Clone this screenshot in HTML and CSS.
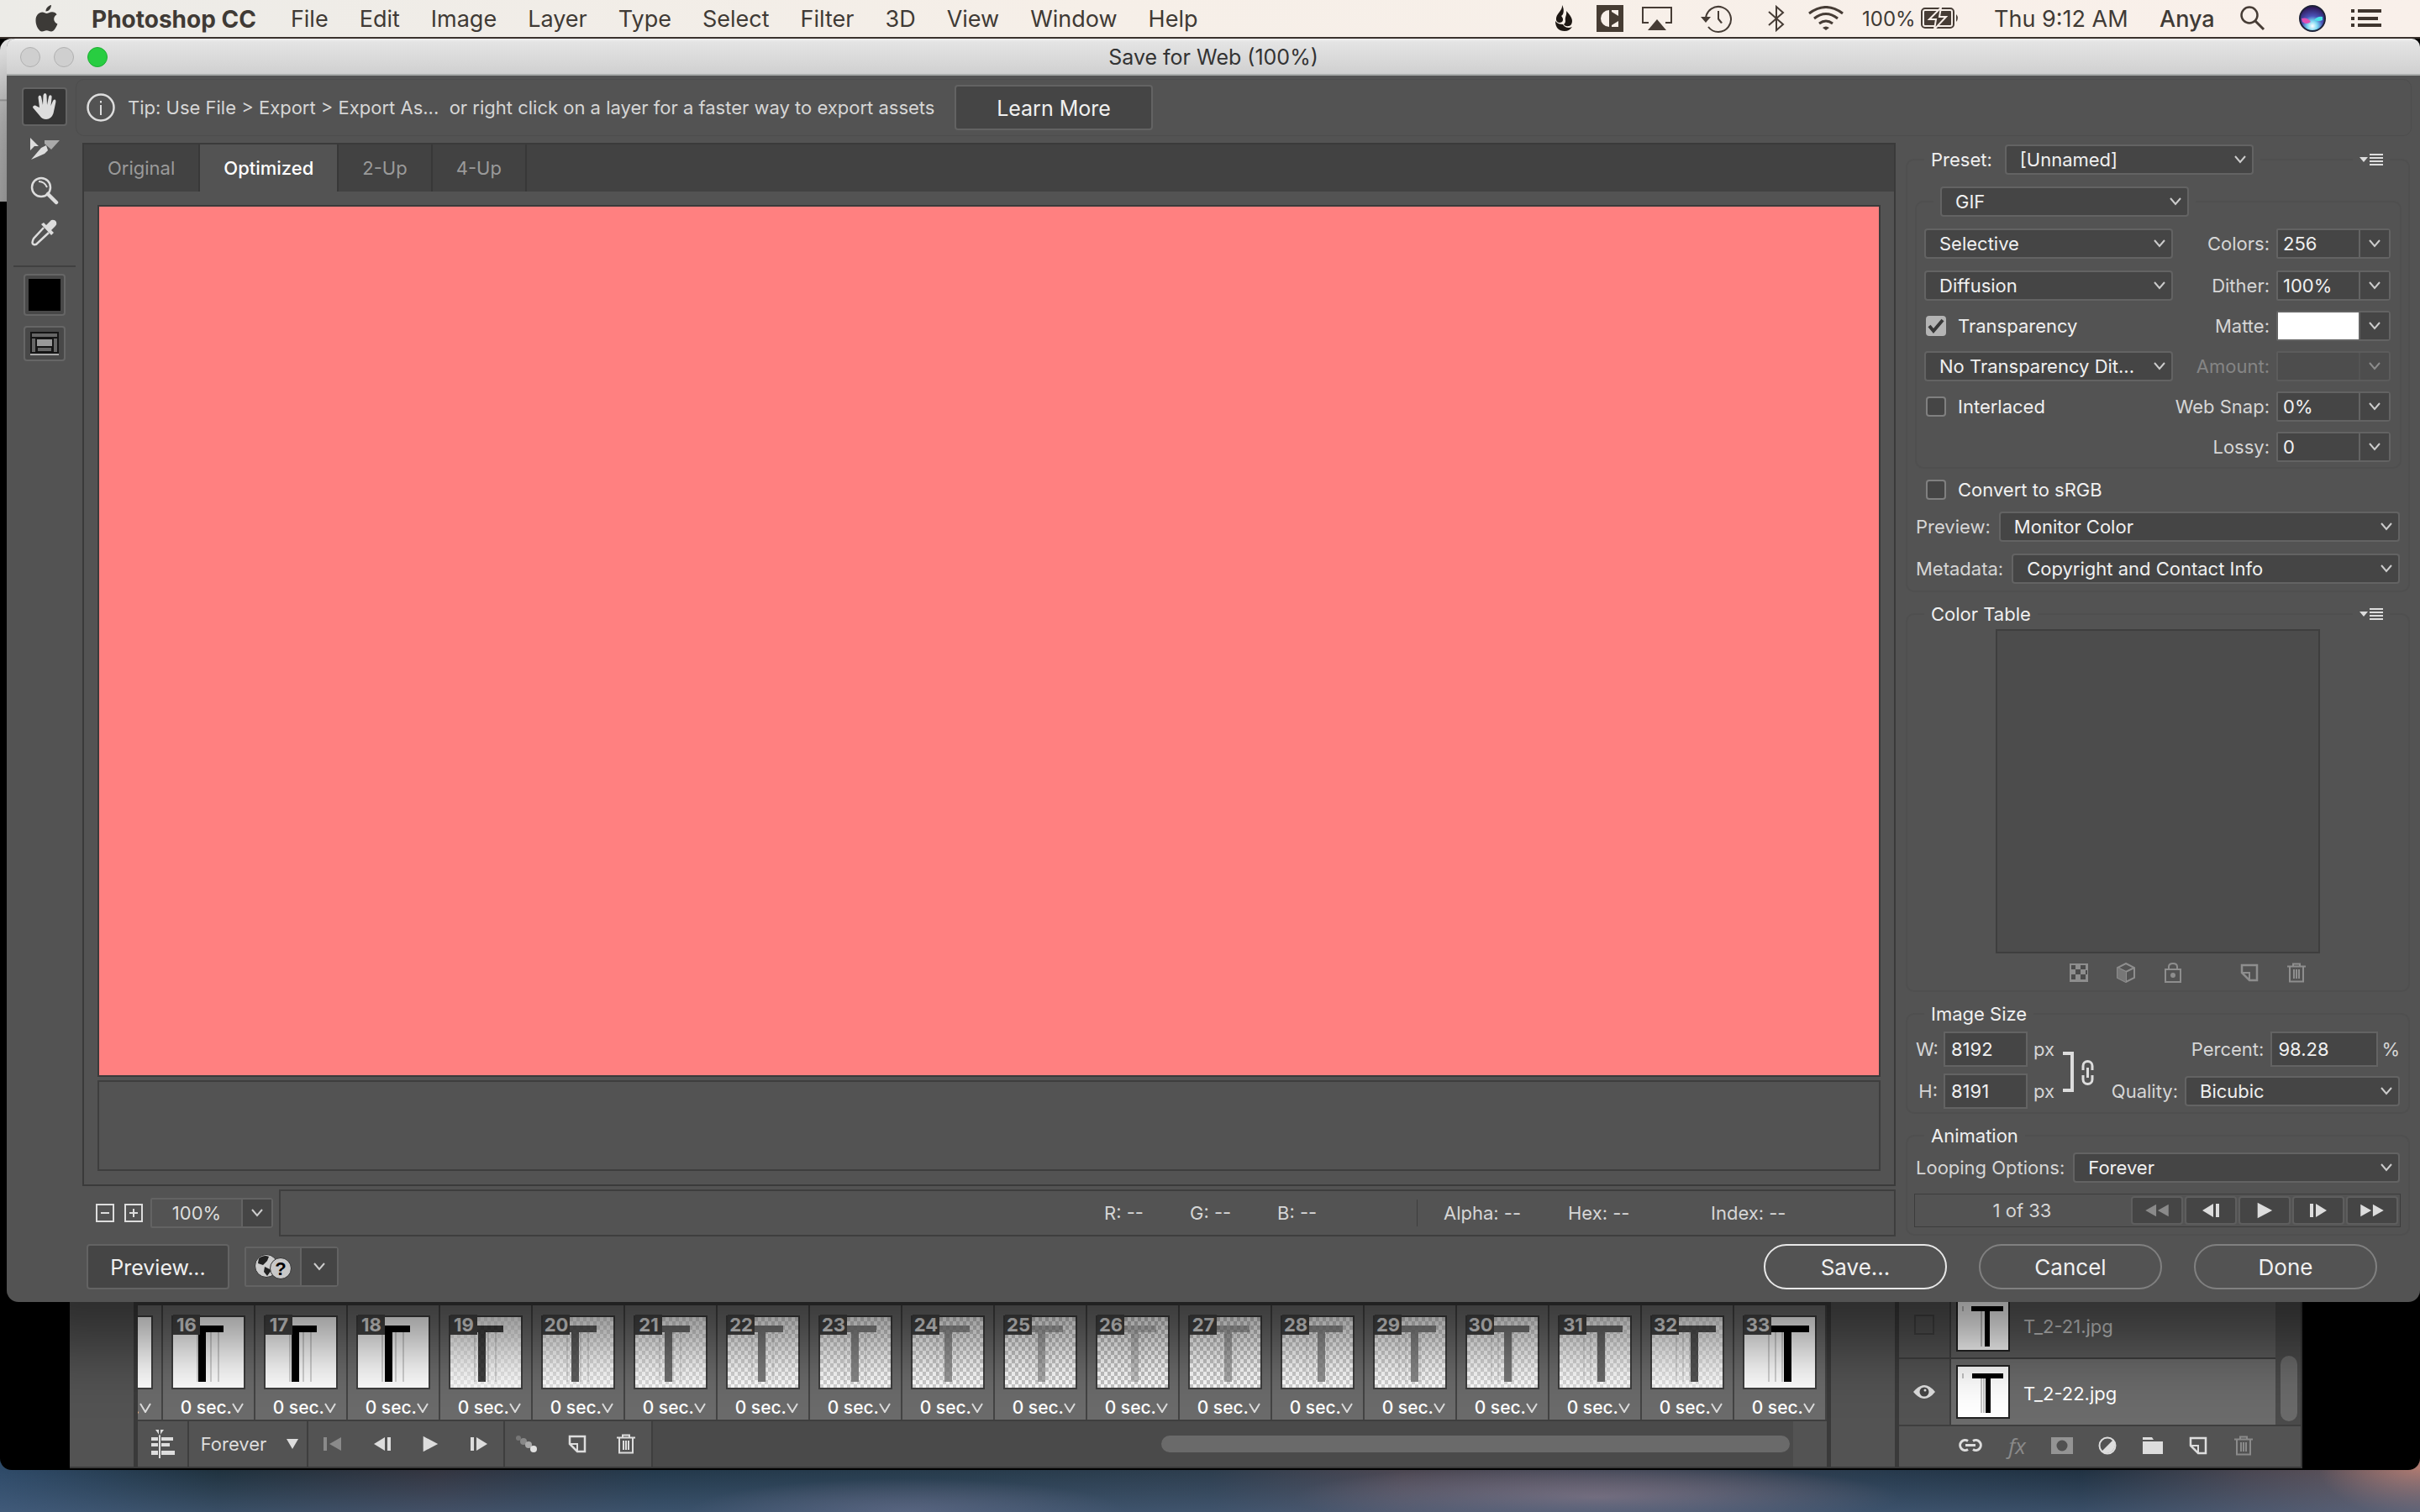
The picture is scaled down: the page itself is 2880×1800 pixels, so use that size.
FILE: index.html
```html
<!DOCTYPE html>
<html lang="en">
<head>
<meta charset="utf-8">
<title>Save for Web (100%)</title>
<link rel="stylesheet" href="styles.css">
</head>
<body>
<svg class="defs" aria-hidden="true">
  <symbol id="i-trash" viewBox="0 0 24 24"><path d="M1 4.500H23M8 4V1.500H16V4M4 5V22.500H20V5M9 8V19M12 8V19M15 8V19" fill="none" stroke="currentColor" stroke-width="2"/></symbol>
  <symbol id="i-new" viewBox="0 0 24 24"><path d="M3 3H21V21H12L3 12Z" fill="none" stroke="currentColor" stroke-width="2.500"/><path d="M3 12H12V21" fill="none" stroke="currentColor" stroke-width="2"/></symbol>
  <symbol id="i-prev" viewBox="0 0 24 24"><path d="M15 4V20L2 12ZM18 4H22V20H18Z" fill="currentColor"/></symbol>
  <symbol id="i-next" viewBox="0 0 24 24"><path d="M9 4V20L22 12ZM2 4H6V20H2Z" fill="currentColor"/></symbol>
  <symbol id="i-play" viewBox="0 0 24 24"><path d="M2 1V23L23 12Z" fill="currentColor"/></symbol>
  <symbol id="i-first" viewBox="0 0 24 18"><path d="M23 1V17L9 9ZM2 1H6V17H2Z" fill="currentColor"/></symbol>
  <symbol id="i-rew" viewBox="0 0 32 24"><path d="M15 4V20L1 12ZM31 4V20L17 12Z" fill="currentColor"/></symbol>
  <symbol id="i-ff" viewBox="0 0 32 24"><path d="M1 4V20L15 12ZM17 4V20L31 12Z" fill="currentColor"/></symbol>
  <symbol id="i-menu" viewBox="0 0 28 16"><path d="M0 5H10L5 11ZM12 1H28V3H12ZM12 5H28V7H12ZM12 9H28V11H12ZM12 13H28V15H12Z" fill="currentColor"/></symbol>
</svg>

<header class="menubar">
  <nav class="menus">
    <svg class="apple" viewBox="0 0 28 34"><path d="M20 1C20 5 17 8.500 13.500 8.500C13.200 5 16.500 1.500 20 1ZM14.500 11C16 11 18 9.200 21 9.200C23.500 9.200 25.500 10.500 26.600 12.200C21.500 15 22.500 21.500 27.400 23.500C26 27.500 23.200 32.500 20 32.500C18 32.500 17 31.200 14.500 31.200C12 31.200 10.800 32.500 9 32.500C5.500 32.500 1.500 26 1.500 19.500C1.500 13 5.500 9.600 9.300 9.600C11.500 9.600 13.200 11 14.500 11Z" fill="#3c3a37"/></svg>
    <a class="app" href="#">Photoshop CC</a><a href="#">File</a><a href="#">Edit</a><a href="#">Image</a><a href="#">Layer</a><a href="#">Type</a><a href="#">Select</a><a href="#">Filter</a><a href="#">3D</a><a href="#">View</a><a href="#">Window</a><a href="#">Help</a>
  </nav>
  <div class="status-items">
    <svg width="22" height="32" viewBox="0 0 22 32"><path d="M8 0C9 7 0 10 1 18C2 21 5 22 8 20C10 18 9 15 7 13C10 12 11 5 8 0ZM13 7C14 12 11 14 12 19C12 21 11 22 10 23C12 26 17 26 19 23C22 18 18 12 13 7ZM0 19C0 27 4 31 11 31C15 31 18 29 20 26C16 28 11 27 9 23C6 23 2 22 0 19Z" fill="#1d1713"/></svg>
    <svg width="32" height="32"><path d="M0 0H32V32H0Z" fill="#463c33"/><path d="M15 6V26A10 10 0 0 1 15 6ZM18 6H26V13L18 8ZM18 26H26V19L18 24Z" fill="#f8efe9"/></svg>
    <svg width="36" height="28" viewBox="0 0 36 28"><path d="M8 19H1V1H35V19H28" fill="none" stroke="#463c35" stroke-width="2"/><path d="M7 28L18 15L29 28Z" fill="#463c35"/></svg>
    <svg width="38" height="34" viewBox="0 0 38 34"><path d="M6 17A15 15 0 1 1 9 27" fill="none" stroke="#463c35" stroke-width="2"/><path d="M0 15H12L6 22ZM20 8H22V17L26 22L24 23L20 18Z" fill="#463c35"/></svg>
    <svg width="20" height="32" viewBox="0 0 20 32"><path d="M1 8L18 23L10 30V2L18 9L1 24" fill="none" stroke="#463c35" stroke-width="2"/></svg>
    <svg width="42" height="30" viewBox="0 0 42 30"><path d="M1 9Q21-6 41 9M7 15Q21 4 35 15M13 21Q21 15 29 21" fill="none" stroke="#463c35" stroke-width="3"/><path d="M21 29L17 26Q21 23 25 26Z" fill="#463c35"/></svg>
    <span class="pct">100%</span>
    <svg width="46" height="26" viewBox="0 0 46 26"><rect x="1" y="1" width="38" height="23" rx="4" fill="none" stroke="#463c35" stroke-width="2"/><rect x="4" y="4" width="32" height="17" rx="1" fill="#463c35"/><path d="M42 8Q46 12 42 17Z" fill="#463c35"/><path d="M24 0L10 14H18L16 26L30 11H22Z" fill="#463c35" stroke="#f8efe9" stroke-width="2"/></svg>
    <span>Thu 9:12 AM</span>
    <span class="user">Anya</span>
    <svg width="30" height="30" viewBox="0 0 30 30"><circle cx="11" cy="11" r="9.500" fill="none" stroke="#463c35" stroke-width="2.500"/><path d="M18 18L28 28" stroke="#463c35" stroke-width="3"/></svg>
    <svg width="32" height="32"><defs><radialGradient id="siri" cx=".5" cy=".8" r=".8"><stop offset="0" stop-color="#fff"/><stop offset=".25" stop-color="#7ad7f2"/><stop offset=".5" stop-color="#4a52b8"/><stop offset="1" stop-color="#2a0f4a"/></radialGradient></defs><circle cx="16" cy="16" r="15" fill="url(#siri)" stroke="#1d2238" stroke-width="2"/><path d="M3 16Q10 14 14 20Q9 24 4 20Z" fill="#e04fb4"/><path d="M28 14Q22 13 18 18Q24 20 28 18Z" fill="#49e2e8"/></svg>
    <svg width="36" height="22"><path d="M0 0H4V4H0ZM8 0H36V4H8ZM0 9H4V13H0ZM8 9H32V13H8ZM0 17H4V21H0ZM8 17H36V21H8Z" fill="#3f352e"/></svg>
  </div>
</header>

<main class="desktop">
  <section class="app-window">
    <div class="app-chrome"></div>
    <div class="docks">
      <div class="dock"></div>
      <div class="timeline">
        <div class="frames" id="frames"></div>
        <div class="timeline-bar">
          <button class="cell c-conv" aria-label="Convert to video timeline"><svg width="28" height="34" viewBox="0 0 28 34"><path d="M0 9H8V13H0ZM12 9H26V13H12ZM0 16H8V20H0ZM12 16H22V20H12ZM0 25H8V30H0ZM12 25H28V30H12Z" fill="#ddd"/><path d="M9 0V34H11V0M5 0H15L10 7Z" fill="#ddd"/></svg></button>
          <button class="cell c-loop">Forever<svg width="14" height="12"><path d="M0 0H14L7 12Z" fill="#ddd"/></svg></button>
          <div class="cell c-play">
            <button class="dim" aria-label="First frame"><svg width="24" height="18"><use href="#i-first"/></svg></button>
            <button aria-label="Previous frame"><svg width="24" height="24"><use href="#i-prev"/></svg></button>
            <button aria-label="Play"><svg width="20" height="20"><use href="#i-play"/></svg></button>
            <button aria-label="Next frame"><svg width="24" height="24"><use href="#i-next"/></svg></button>
          </div>
          <div class="cell c-edit">
            <button aria-label="Tween"><svg width="28" height="22"><circle cx="4" cy="4" r="3" fill="#777"/><circle cx="10" cy="8" r="4" fill="#888"/><circle cx="16" cy="12" r="4" fill="#aaa"/><circle cx="22" cy="17" r="4" fill="#e0e0e0"/></svg></button>
            <button aria-label="Duplicate frame"><svg width="24" height="24"><use href="#i-new"/></svg></button>
            <button aria-label="Delete frame"><svg width="24" height="24"><use href="#i-trash"/></svg></button>
          </div>
          <div class="track"><div class="thumb"></div></div>
        </div>
      </div>
      <div class="dock"></div>
      <div class="layers">
        <div class="layer-list">
          <div class="layer off"><span class="eye"><i class="noeye"></i></span><div class="layer-main"><svg class="pic" viewBox="0 0 60 60"><path fill="#fff" d="M0 0H60V60H0Z"/><path d="M16 8H54V14H16ZM32 14H38V56H32Z"/><path d="M6 8V14M28 14V56" stroke="#888"/></svg><span>T_2-21.jpg</span></div></div>
          <div class="layer on"><span class="eye"><svg width="26" height="16"><path d="M0 8Q13-8 26 8Q13 24 0 8Z" fill="#ddd"/><circle cx="13" cy="8" r="5.500" fill="#444"/><circle cx="14" cy="6" r="1.500" fill="#ddd"/></svg></span><div class="layer-main"><svg class="pic" viewBox="0 0 60 60"><path fill="#fff" d="M0 0H60V60H0Z"/><path d="M17 8H54V14H17ZM33 14H39V55H33Z"/><path d="M6 8V14M28 14V55M31 14V55" stroke="#888"/></svg><span>T_2-22.jpg</span></div></div>
        </div>
        <div class="vtrack"><div class="vthumb"></div></div>
        <div class="layer-bar">
          <button aria-label="Link layers"><svg width="30" height="18"><path d="M12 3.500A6 6 0 1 0 12 13.500M18 3.500A6 6 0 1 1 18 13.500" fill="none" stroke="#ddd" stroke-width="3"/><path d="M9 8.500H21" stroke="#ddd" stroke-width="3"/></svg></button>
          <button class="dim fx">fx</button>
          <button class="dim" aria-label="Add mask"><svg width="26" height="20"><path d="M0 0H26V20H0Z" fill="#949494"/><circle cx="13" cy="10" r="6.500" fill="#505050"/></svg></button>
          <button aria-label="Adjustment layer"><svg width="22" height="22"><circle cx="11" cy="11" r="9.500" fill="none" stroke="#ddd" stroke-width="2"/><path d="M18 4A10 10 0 0 1 4 18Z" fill="#ddd"/></svg></button>
          <button aria-label="New group"><svg width="24" height="20"><path d="M0 0H11L13 3H0ZM0 5H24V20H0Z" fill="#ddd"/></svg></button>
          <button aria-label="New layer"><svg width="24" height="24"><use href="#i-new"/></svg></button>
          <button class="dim" aria-label="Delete layer"><svg width="24" height="24"><use href="#i-trash"/></svg></button>
        </div>
      </div>
    </div>
  </section>

  <section class="dialog" role="dialog" aria-labelledby="dlg-title">
    <header class="titlebar">
      <div class="lights"><i></i><i></i><i class="go"></i></div>
      <h1 id="dlg-title">Save for Web (100%)</h1>
    </header>
    <div class="dialog-body">
      <aside class="tools">
        <button class="tool active" aria-label="Hand"><svg width="28" height="32" viewBox="0 0 28 32"><path d="M8 17L6.500 5Q6.500 2.500 8.500 2.500Q10 2.500 10.300 5L12 14L12.500 2.500Q13 0 14.500 0Q16.500 0 16.500 2.500L17 14L19 4Q19.500 2 21 2.200Q23 2.500 22.600 5L21.500 15L24 9Q25 7 26.500 7.600Q28 8.500 27.300 11L24.500 24Q22 31 16 31Q11 31 8.500 27L0 17Q0 14 3 14.500Z" fill="#ddd"/></svg></button>
        <button class="tool" aria-label="Slice Select"><svg width="36" height="28" viewBox="0 0 36 28"><path d="M1 1L11 11L6 11L1 16Z" fill="#ddd"/><path d="M2 27L14 13L20 10L22 16L18 20Z" fill="#ddd"/><path d="M18 4H36L26 15L18 8Z" fill="#aaa"/></svg></button>
        <button class="tool" aria-label="Zoom"><svg width="34" height="34" viewBox="0 0 34 34"><circle cx="13" cy="13" r="11" fill="none" stroke="#ddd" stroke-width="2.500"/><path d="M10 6Q17 6 20 13" fill="none" stroke="#ddd" stroke-width="2"/><path d="M21 21L31 31" stroke="#ddd" stroke-width="4.500" stroke-linecap="round"/></svg></button>
        <button class="tool" aria-label="Eyedropper"><svg width="34" height="34" viewBox="0 0 34 34"><path d="M16 11L4 24Q1 30 4 31Q7 32 9 29L22 17" fill="none" stroke="#ddd" stroke-width="2.500"/><path d="M13 7L16 5L19 8L25 2Q29 1 31 4Q32 7 30 9L25 14L28 17L25 20Z" fill="#ddd"/></svg></button>
        <hr>
        <button class="swatch" aria-label="Eyedropper color"><i></i></button>
        <button class="swatch slices" aria-label="Toggle slices visibility"><svg width="34" height="28"><path d="M0 0H34V28H0Z" fill="#151515"/><path d="M2 2H32V6H2ZM2 8H6V24H2ZM28 8H32V24H28ZM9 19H25V23H9Z" fill="#666"/><path d="M8 9H26V17H8Z" fill="#999"/><path d="M0 26H34V28H0Z" fill="#aaa"/></svg></button>
      </aside>
      <div class="content">
        <div class="tip">
          <svg width="34" height="34"><circle cx="17" cy="17" r="15.500" fill="none" stroke="#ddd" stroke-width="2.500"/><path d="M16 9H18V11.500H16ZM16 14H18V26H16Z" fill="#ddd"/></svg>
          <p>Tip: Use File &gt; Export &gt; Export As...&nbsp; or right click on a layer for a faster way to export assets</p>
          <button class="push learn">Learn More</button>
        </div>
        <div class="columns">
          <div class="left">
            <div class="view">
              <div class="tabs"><button>Original</button><button class="sel">Optimized</button><button>2-Up</button><button>4-Up</button></div>
              <div class="canvas"></div>
              <div class="info"></div>
            </div>
            <div class="zoombar">
              <button class="zb" aria-label="Zoom out"><svg width="22" height="22"><path d="M1 1H21V21H1ZM6 11H16" fill="none" stroke="#ddd" stroke-width="2"/></svg></button>
              <button class="zb" aria-label="Zoom in"><svg width="22" height="22"><path d="M1 1H21V21H1ZM6 11H16M11 6V16" fill="none" stroke="#ddd" stroke-width="2"/></svg></button>
              <div class="combo zoom"><input value="100%" aria-label="Zoom level"><button aria-label="Zoom levels"></button></div>
              <div class="readout"><span>R: --</span><span>G: --</span><span>B: --</span><i></i><span>Alpha: --</span><span>Hex: --</span><span>Index: --</span></div>
            </div>
          </div>
          <form class="panel">
            <fieldset>
              <legend><label for="preset">Preset:</label><select id="preset" class="w296"><option>[Unnamed]</option></select></legend>
              <button type="button" class="pmenu" aria-label="Optimize menu"><svg width="28" height="16"><use href="#i-menu"/></svg></button>
              <fieldset class="inner">
                <legend><select class="w296" aria-label="Format"><option>GIF</option></select></legend>
                <div class="opts">
                  <select aria-label="Color reduction"><option>Selective</option></select><label for="colors">Colors:</label><div class="combo"><input id="colors" value="256"><button type="button" aria-label="Color counts"></button></div>
                  <select aria-label="Dither method"><option>Diffusion</option></select><label for="dither">Dither:</label><div class="combo"><input id="dither" value="100%"><button type="button" aria-label="Dither amounts"></button></div>
                  <label class="check"><input type="checkbox" checked>Transparency</label><label for="matte">Matte:</label><div class="combo"><input id="matte" class="white" readonly><button type="button" aria-label="Matte colors"></button></div>
                  <select aria-label="Transparency dither"><option>No Transparency Dit...</option></select><label class="off" for="amount">Amount:</label><div class="combo off"><input id="amount" disabled><button type="button" disabled aria-label="Amounts"></button></div>
                  <label class="check"><input type="checkbox">Interlaced</label><label for="snap">Web Snap:</label><div class="combo"><input id="snap" value="0%"><button type="button" aria-label="Web snap amounts"></button></div>
                  <span></span><label for="lossy">Lossy:</label><div class="combo"><input id="lossy" value="0"><button type="button" aria-label="Lossy amounts"></button></div>
                </div>
              </fieldset>
              <label class="check srgb"><input type="checkbox">Convert to sRGB</label>
              <div class="row"><label for="preview">Preview:</label><select id="preview"><option>Monitor Color</option></select></div>
              <div class="row"><label for="meta">Metadata:</label><select id="meta"><option>Copyright and Contact Info</option></select></div>
            </fieldset>
            <fieldset class="ctable">
              <legend>Color Table</legend>
              <button type="button" class="pmenu" aria-label="Color table menu"><svg width="28" height="16"><use href="#i-menu"/></svg></button>
              <div class="table-box"></div>
              <div class="table-tools">
                <button type="button" aria-label="Map to transparent"><svg width="24" height="24"><path d="M1 1H23V23H1Z" fill="#8e8e8e"/><path d="M3 3H8V8H3ZM14 3H20V8H14ZM8 8H14V14H8ZM3 14H8V20H3ZM14 14H20V20H14ZM20 9H22V14H20Z" fill="#4c4c4c"/></svg></button>
                <button type="button" aria-label="Shift to web palette"><svg width="24" height="24"><path d="M12 1L22 6V18L12 23L2 18V6ZM2 6L12 11L22 6M12 11V23" fill="none" stroke="#8e8e8e" stroke-width="2"/><path d="M2 6L12 11V23L2 18Z" fill="#777"/></svg></button>
                <button type="button" aria-label="Lock color"><svg width="24" height="24"><path d="M3 8H21V23H3ZM7 8V5Q7 1 12 1Q17 1 17 5V8" fill="none" stroke="#8e8e8e" stroke-width="2"/><circle cx="12" cy="15" r="3" fill="#8e8e8e"/></svg></button>
                <button type="button" class="push-right" aria-label="New color"><svg width="24" height="24"><use href="#i-new"/></svg></button>
                <button type="button" aria-label="Delete color"><svg width="24" height="24"><use href="#i-trash"/></svg></button>
              </div>
            </fieldset>
            <fieldset class="isize">
              <legend>Image Size</legend>
              <div class="size">
                <div class="dims">
                  <label for="w">W:</label><input id="w" value="8192"><span>px</span>
                  <label for="h">H:</label><input id="h" value="8191"><span>px</span>
                </div>
                <svg class="link" width="40" height="50"><path d="M0 2H11V46H0" fill="none" stroke="#ddd" stroke-width="4"/><path d="M24 22V17A5.500 5.500 0 0 1 35 17V22M24 28V33A5.500 5.500 0 0 0 35 33V28" fill="none" stroke="#ddd" stroke-width="3"/><path d="M29.500 19V31" stroke="#ddd" stroke-width="3"/></svg>
                <div class="scale">
                  <div><label for="pc">Percent:</label><input id="pc" value="98.28"><span>%</span></div>
                  <div><label for="q">Quality:</label><select id="q"><option>Bicubic</option></select></div>
                </div>
              </div>
            </fieldset>
            <fieldset class="anim">
              <legend>Animation</legend>
              <div class="row"><label for="loop">Looping Options:</label><select id="loop"><option>Forever</option></select></div>
              <div class="player"><span>1 of 33</span>
                <button type="button" class="dim" aria-label="First"><svg width="32" height="22"><use href="#i-rew"/></svg></button>
                <button type="button" aria-label="Previous"><svg width="24" height="24"><use href="#i-prev"/></svg></button>
                <button type="button" aria-label="Play"><svg width="20" height="20"><use href="#i-play"/></svg></button>
                <button type="button" aria-label="Next"><svg width="24" height="24"><use href="#i-next"/></svg></button>
                <button type="button" aria-label="Last"><svg width="32" height="22"><use href="#i-ff"/></svg></button>
              </div>
            </fieldset>
          </form>
        </div>
      </div>
    </div>
    <footer class="actions">
      <button class="push preview">Preview...</button>
      <div class="browser"><button aria-label="Preview browser"><svg width="44" height="32"><circle cx="14" cy="15" r="13.500" fill="#ccc" stroke="#333"/><path d="M5 6Q11 1 17 4L15 9L10 14L4 12ZM12 16L20 20L15 27L11 22Z" fill="#222"/><circle cx="31" cy="18" r="12.500" fill="#c8c8c8" stroke="#333"/><text x="31" y="26" text-anchor="middle" class="q">?</text></svg></button><button class="drop" aria-label="Browser list"></button></div>
      <button class="pill save">Save...</button><button class="pill">Cancel</button><button class="pill">Done</button>
    </footer>
  </section>
</main>
<script src="frames.js"></script>
</body>
</html>
```
FILE: frames.js
```js
// Opacity of the letter in each animation frame, from frame 15 to frame 33.
const fade = [1, 1, 1, 1, .76, .64, .56, .5, .45, .38, .3, .2, .3, .4, .45, .52, .58, .68, 1];
const strip = document.getElementById("frames");
strip.innerHTML = fade.map((o, i) => {
  const x = 29 + i;
  const check = o === 1 ? 0 : Math.min(1, (1 - o) * 1.3);
  // The first frame is scrolled almost out of view: only its right edge shows.
  const first = i === 0;
  return `<div class="frame">
    <svg width="84" height="84" class="shot">
      <rect width="84" height="84" fill="#fff"/>
      <rect width="84" height="84" fill="url(#checks)" opacity="${check}"/>
      <g opacity="${o}">
        <rect x="${first ? 0 : x - 20}" y="10" width="50" height="8"/><rect x="${x}" y="18" width="9" height="59"/>
        <path d="M29 18V77M37 18V77M45 18V77M54 18V77" stroke="#000" stroke-opacity=".35"/>
      </g>
      <rect width="84" height="84" fill="url(#checks)" opacity="${check / 4}"/>
    </svg>
    ${first ? "" : `<b>${i + 15}</b>`}
    <button>${first ? "." : "0 sec."}<svg width="14" height="12"><path d="M1 1L7 11L13 1" fill="none" stroke="#ddd" stroke-width="2"/></svg></button>
  </div>`;
}).join("") + `<svg class="defs"><pattern id="checks" width="8" height="10" patternUnits="userSpaceOnUse"><path d="M0 0H4V5H0ZM4 5H8V10H4Z" fill="#c8c8c8"/></pattern></svg>`;
```
FILE: styles.css
```css
* { box-sizing: border-box; }
html, body { height: 100%; }
body { margin: 0; display: flex; flex-direction: column; overflow: hidden; font: 22px/28px Inter, "Liberation Sans", sans-serif; color: #d6d6d6; background: #000; }
button, input, select { font: inherit; color: inherit; margin: 0; border: 0; background: none; padding: 0; border-radius: 0; }
button { display: flex; align-items: center; justify-content: center; }
svg { display: block; flex: none; }
.defs { position: absolute; width: 0; height: 0; }

/* Menu bar */
.menubar { flex: none; height: 46px; display: flex; justify-content: space-between; align-items: center; padding: 0 46px 0 40px; background: linear-gradient(90deg, #ecebe7, #f6efe8 45%, #f9f0ea); border-bottom: 2px solid #3a322d; font-size: 27px; color: #3f3a35; position: relative; z-index: 3; }
.menus { display: flex; align-items: center; gap: 37px; }
.menus a { color: inherit; text-decoration: none; padding-top: 1px; }
.menus .app { font-weight: 700; font-size: 28px; margin-right: 4px; }
.apple { width: 30px; height: 34px; margin-right: 2px; }
.status-items { display: grid; grid-template-columns: 49px 54px 70px 80px 48px 64px 70px 87px 197px 96px 70px 62px 36px; align-items: center; white-space: nowrap; }
.status-items span { padding-top: 1px; }
.pct { font-size: 24px; }
.user { font-weight: 500; }

/* Desktop and the application window behind the dialog */
.desktop { flex: 1; position: relative; background: linear-gradient(transparent 97%, rgba(80, 104, 136, .55)), radial-gradient(360px 40px at 1900px 99%, #86707a, transparent), radial-gradient(260px 40px at 1080px 100%, #5f6076, transparent), radial-gradient(120px 60px at 100% 97%, #b07a70, transparent), linear-gradient(90deg, #2e4a68, #1e303c 9%, #33343e 18%, #22384a 27%, #263a4a 40%, #2c3c4c 50%, #4c4650 58%, #3a4252 66%, #25384a 78%, #1f3040 86%, #4a4650 93%, #6a5a60); }
.app-window { position: absolute; inset: 0 0 50px; background: #000; border-radius: 0 0 14px 14px; display: flex; flex-direction: column; justify-content: space-between; overflow: hidden; }
.app-chrome { height: 194px; background: linear-gradient(#e8e8e8, #d2d2d2 72px, #999 73px, #ccc 75px, #bbb); border-radius: 14px 14px 0 0; }
.docks { display: grid; grid-template-columns: 76px 1fr 76px 480px; gap: 5px; margin: 0 140px 2px 83px; background: #3a3a3a; height: 250px; border-bottom: 2px solid #3a3a3a; }
.dock { background: #535353; }
.timeline { display: flex; flex-direction: column; justify-content: flex-end; min-width: 0; }
.frames { display: flex; justify-content: flex-end; overflow: hidden; height: 136px; }
.frame { flex: none; width: 110px; height: 136px; position: relative; background: #6b6b6b; border-right: 2px solid #444; padding: 14px 0 0 12px; }
.shot { outline: 2px solid #3e3e3e; }
.frame b { position: absolute; left: 12px; top: 11px; width: 32px; height: 24px; background: #464646; color: #e0e0e0; font-weight: 700; text-align: center; line-height: 24px; }
.frame button { justify-content: flex-end; width: 84px; margin-top: 10px; color: #fff; font-size: 21px; font-weight: 500; white-space: nowrap; }
.timeline-bar { display: flex; height: 56px; border-top: 2px solid #3e3e3e; background: #4a4a4a; color: #ddd; }
.cell { background: #535353; border-right: 2px solid #3e3e3e; display: flex; align-items: center; flex: none; }
.c-conv { width: 61px; }
.c-loop { width: 142px; gap: 24px; padding-left: 4px; }
.c-play { width: 234px; justify-content: space-between; padding: 0 17px 0 16px; }
.c-edit { width: 176px; justify-content: space-between; padding: 0 18px 0 12px; }
.dim { color: #8a8a8a; }
.track { flex: 1; margin-right: 40px; display: flex; justify-content: flex-end; align-items: center; padding-right: 4px; box-shadow: 40px 0 #535353; }
.thumb { width: 748px; height: 20px; border-radius: 10px; background: #6a6a6a; }
.layers { display: grid; grid-template-columns: 1fr 30px; grid-template-rows: 1fr 48px; border-right: 2px solid #3a3a3a; background: #535353; overflow: hidden; }
.layer-list { display: flex; flex-direction: column; justify-content: flex-end; gap: 2px; background: #3e3e3e; border-bottom: 2px solid #3e3e3e; }
.layer { display: flex; flex: none; height: 78px; gap: 2px; }
.eye { width: 60px; background: #535353; display: flex; align-items: center; justify-content: center; }
.noeye { width: 24px; height: 24px; border: 2px solid #414141; }
.layer-main { flex: 1; display: flex; align-items: center; gap: 16px; padding-left: 6px; background: #5c5c5c; color: #ccc; }
.layer-main span { padding-top: 3px; }
.on .layer-main { background: #6b6b6b; color: #fff; }
.pic { width: 64px; height: 64px; border: 2px solid #222; }
.vtrack { background: #4a4a4a; padding: 0 4px 4px 6px; display: flex; align-items: flex-end; border-bottom: 2px solid #3e3e3e; }
.vthumb { width: 20px; height: 78px; border-radius: 10px; background: #6a6a6a; }
.layer-bar { grid-column: 1 / -1; display: flex; align-items: center; justify-content: space-between; padding: 0 56px 2px 70px; color: #ddd; }
.fx { font: italic 26px/28px "Open Sans", sans-serif; }

/* Dialog */
.dialog { position: absolute; inset: 0 0 250px 8px; display: flex; flex-direction: column; background: #535353; border-radius: 10px 10px 14px 14px; box-shadow: 0 50px 80px rgba(0, 0, 0, .48); overflow: hidden; z-index: 2; }
.titlebar { flex: none; height: 44px; background: linear-gradient(#f0f0f0, #e4e4e4 10%, #d0d0d0); border-bottom: 2px solid #a9acab; display: grid; grid-template-columns: 1fr auto 1fr; align-items: center; }
.titlebar h1 { margin: 0; padding-top: 2px; font-size: 25px; font-weight: 400; color: #333; }
.lights { display: flex; gap: 16px; padding: 2px 0 0 16px; }
.lights i { width: 24px; height: 24px; border-radius: 50%; background: #cfcfcf; border: 1px solid #b0b0b0; }
.lights .go { background: #28cd41; border-color: #1fae33; }
.dialog-body { flex: 1; display: flex; min-height: 0; }
.tools { width: 90px; flex: none; display: flex; flex-direction: column; align-items: center; padding: 14px 0 0; }
.tool { width: 54px; height: 46px; margin-bottom: 4px; }
.tool.active { background: #353535; border: 2px solid #636363; border-radius: 4px; }
.tools hr { width: 74px; margin: 12px 0 8px; border: 0; border-top: 2px solid #404040; }
.swatch { width: 50px; height: 50px; margin: 0 0 12px; background: #484848; border: 2px solid #666; border-radius: 4px; }
.swatch i { width: 38px; height: 38px; background: #000; }
.slices { height: 42px; }
.content { flex: 1; display: flex; flex-direction: column; min-width: 0; }
.tip { height: 68px; margin: 4px 10px 8px -8px; border: 1px solid #4d4d4d; border-radius: 10px; display: flex; align-items: center; padding-left: 12px; gap: 15px; }
.tip p { margin: 0; width: 969px; white-space: nowrap; }
.push { background: #454545; border: 2px solid #636363; border-radius: 4px; color: #f0f0f0; font-size: 25px; height: 54px; padding-top: 2px; }
.learn { width: 236px; }
.columns { flex: 1; display: flex; min-height: 0; }
.left { flex: 1; display: flex; flex-direction: column; min-width: 0; }
.view { flex: 1; display: flex; flex-direction: column; border: 2px solid #3a3a3a; }
.tabs { display: flex; height: 56px; background: #424242; color: #9a9a9a; }
.tabs button { padding: 0 28px; border-right: 2px solid #383838; }
.tabs .sel { background: #535353; color: #fff; font-weight: 500; }
.canvas { flex: 1; margin: 16px 16px 4px; border: 2px solid #3a3a3a; background: #ff8080; }
.info { height: 108px; margin: 0 16px 16px; border: 2px solid #3e3e3e; }
.zoombar { display: flex; align-items: center; height: 60px; padding: 4px 0 0 16px; margin-bottom: 9px; }
.zb { margin-right: 12px; }
.zb + .zb { margin-right: 9px; }
.readout { flex: 1; align-self: stretch; margin-left: 7px; border: 2px solid #3e3e3e; display: grid; grid-template-columns: 102px 104px 166px 32px 148px 170px 218px; justify-content: end; align-items: center; }
.readout i { width: 1px; height: 32px; background: #3e3e3e; }

/* Settings panel */
.panel { width: 624px; flex: none; padding: 2px 12px 0; color: #d6d6d6; }
fieldset { position: relative; min-width: 0; margin: 0 0 11px; padding: 14px 10px 8px 10px; border: 2px solid #4f4f4f; border-radius: 10px; }
legend { margin-left: 10px; padding: 0 8px; color: #f0f0f0; display: flex; align-items: center; gap: 15px; min-height: 30px; }
select { appearance: none; height: 36px; min-width: 0; padding: 0 40px 0 16px; border: 2px solid #636363; border-radius: 4px; color: #f0f0f0; line-height: 28px; background: #454545 url("data:image/svg+xml,%3Csvg xmlns='http://www.w3.org/2000/svg' width='14' height='10'%3E%3Cpath d='M1 1L7 8L13 1' fill='none' stroke='%23ccc' stroke-width='2'/%3E%3C/svg%3E") no-repeat right 7px center; }
.w296 { width: 296px; }
.pmenu { position: absolute; right: 22px; top: -34px; padding: 8px; background: #535353; color: #ddd; }
.inner { margin-bottom: 7px; padding: 14px 11px 6px 9px; margin-left: -1px; margin-right: -2px; }
.inner legend { margin-left: 11px; }
.opts { display: grid; grid-template-columns: 296px 1fr 136px; grid-template-rows: 38px; grid-auto-rows: 36px; row-gap: 12px; align-items: start; line-height: 36px; }
.opts > label:not(.check) { text-align: right; padding-right: 8px; white-space: nowrap; }
.opts .off { color: #858585; }
.combo { display: flex; height: 36px; border: 2px solid #636363; border-radius: 2px 4px 4px 2px; background: #454545; }
.combo input { flex: 1; width: 0; padding-left: 6px; color: #f0f0f0; }
.combo button, .drop { width: 36px; border-left: 2px solid #636363; background: #454545 url("data:image/svg+xml,%3Csvg xmlns='http://www.w3.org/2000/svg' width='14' height='10'%3E%3Cpath d='M1 1L7 8L13 1' fill='none' stroke='%23ccc' stroke-width='2'/%3E%3C/svg%3E") no-repeat center; }
.combo .white { background: #fff; }
.combo.off { border-color: #5c5c5c; background: #4d4d4d; }
.combo.off button { background-color: #4d4d4d; border-color: #5c5c5c; opacity: .5; }
.zoom { width: 146px; background: none; }
.zoom input { text-align: center; padding: 0; color: #ddd; }
.check { display: flex; align-items: center; gap: 14px; height: 36px; color: #f0f0f0; padding-left: 2px; line-height: 36px; }
.check input { appearance: none; width: 24px; height: 24px; border: 2px solid #808080; border-radius: 4px; background: #454545; }
.check input:checked { border-color: #b4b4b4; background: #b4b4b4 url("data:image/svg+xml,%3Csvg xmlns='http://www.w3.org/2000/svg' width='20' height='20'%3E%3Cpath d='M2 10L7 16L18 3' fill='none' stroke='%23383838' stroke-width='4'/%3E%3C/svg%3E") center; }
.srgb { padding-left: 12px; }
.row { display: flex; align-items: center; gap: 10px; margin-top: 14px; }
.srgb + .row { margin-top: 8px; }
.row select { flex: 1; }
.ctable { padding-top: 3px; padding-bottom: 9px; }
.ctable > .pmenu { top: -31px; }
.table-box { width: 386px; height: 386px; margin: 0 auto; border: 2px solid #3e3e3e; background: #4c4c4c; }
.table-tools { width: 386px; margin: 11px auto 0; padding: 0 16px 0 87px; display: flex; gap: 32px; color: #8e8e8e; }
.push-right { margin-left: auto; }
.isize { padding-bottom: 4px; }
.size { display: flex; margin-top: -8px; }
.dims { display: grid; grid-template-columns: 26px 100px auto; gap: 8px 7px; align-items: center; }
.dims label { text-align: right; }
.size input { height: 42px; border: 2px solid #636363; background: #454545; color: #f0f0f0; padding-left: 7px; width: 100%; }
.link { margin: 24px 0 0 10px; }
.scale { flex: 1; display: flex; flex-direction: column; gap: 8px; }
.scale div { display: flex; height: 42px; align-items: center; justify-content: flex-end; gap: 4px; }
.scale input { width: 128px; }
.scale select { width: 256px; }
.scale label { margin-right: 4px; }
.anim { margin: 0; }
.anim .row { margin-top: -9px; }
.player { display: flex; align-items: center; gap: 2px; height: 40px; margin: 13px -1px 0 -2px; border: 1px solid #3c3c3c; padding-right: 2px; }
.player span { flex: 1; text-align: center; }
.player button { width: 62px; height: 34px; border: 2px solid #5e5e5e; border-radius: 4px; background: #454545; color: #ddd; }
.player .dim { color: #8a8a8a; }

.actions { flex: none; display: flex; align-items: center; height: 69px; padding: 0 51px 15px 95px; }
.preview { width: 170px; }
.browser { display: flex; width: 112px; height: 48px; margin-left: 18px; border: 2px solid #636363; border-radius: 2px 4px 4px 2px; }
.browser button:first-child { flex: 1; }
.browser .drop { width: 44px; }
.q { font: 700 22px "Liberation Sans", sans-serif; }
.pill { width: 218px; height: 54px; margin-left: 38px; padding-top: 2px; border: 2px solid #808080; border-radius: 27px; color: #f0f0f0; font-size: 26px; }
.save { margin-left: auto; border-color: #e8e8e8; }
```
